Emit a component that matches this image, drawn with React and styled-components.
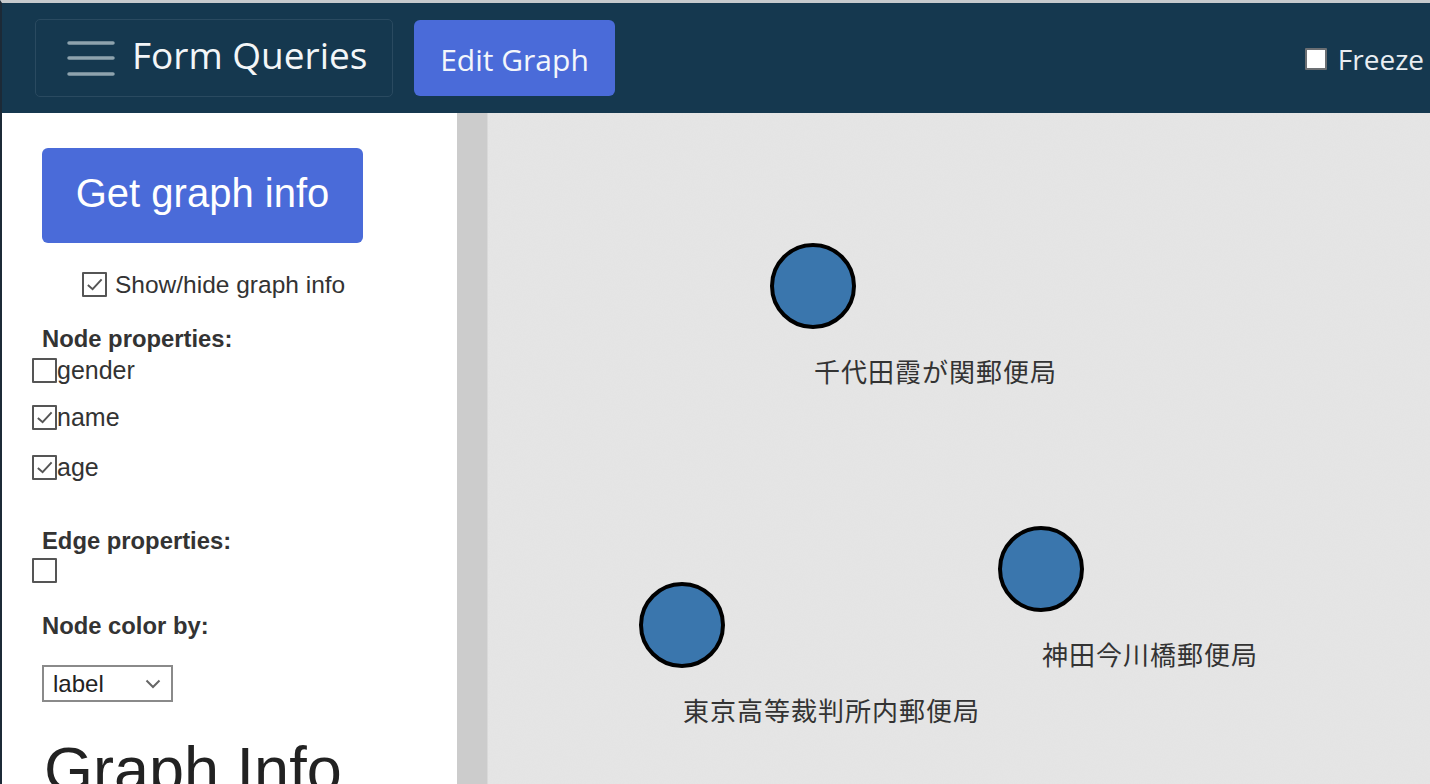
import React from "react";
import styled, { createGlobalStyle } from "styled-components";

const GlobalStyle = createGlobalStyle`
  html, body {
    margin: 0;
    padding: 0;
    height: 100%;
    overflow: hidden;
  }
  body {
    font-family: "Liberation Sans", Arial, sans-serif;
  }
  #root {
    height: 100%;
  }
`;

const nodes = [
  { id: 1, x: 325, y: 173, label: "千代田霞が関郵便局" },
  { id: 2, x: 553, y: 456, label: "神田今川橋郵便局" },
  { id: 3, x: 194, y: 512, label: "東京高等裁判所内郵便局" },
];

const nodeProps = [
  { name: "gender", checked: false, gap: 2 },
  { name: "name", checked: true, gap: 22 },
  { name: "age", checked: true, gap: 25 },
];

function CheckBox({ checked, size = 25, light }) {
  return (
    <Box $size={size} $light={light}>
      {checked && (
        <svg viewBox="0 0 20 20" width={size - 6} height={size - 6}>
          <path d="M3 10.5 L8 15 L17.5 4.5" fill="none" stroke="#555" strokeWidth="2" />
        </svg>
      )}
    </Box>
  );
}

export default function App() {
  return (
    <Root>
      <GlobalStyle />
      <Header>
        <MenuBox>
          <svg width="48" height="36" viewBox="0 0 48 36">
            <g stroke="#8ea3ae" strokeWidth="3.5" strokeLinecap="round">
              <line x1="2" y1="4" x2="46" y2="4" />
              <line x1="2" y1="19" x2="46" y2="19" />
              <line x1="2" y1="35" x2="46" y2="35" />
            </g>
          </svg>
          <span>Form Queries</span>
        </MenuBox>
        <EditButton>Edit Graph</EditButton>
        <Spacer />
        <Freeze>
          <CheckBox size={22} light />
          <span>Freeze</span>
        </Freeze>
      </Header>
      <Main>
        <Sidebar>
          <InfoButton>Get graph info</InfoButton>
          <ShowRow>
            <CheckBox checked />
            <span>Show/hide graph info</span>
          </ShowRow>
          <SectionTitle $gap={33}>Node properties:</SectionTitle>
          {nodeProps.map((p) => (
            <PropRow key={p.name} $gap={p.gap}>
              <CheckBox checked={p.checked} />
              <span>{p.name}</span>
            </PropRow>
          ))}
          <SectionTitle $gap={52}>Edge properties:</SectionTitle>
          <PropRow $gap={0}>
            <CheckBox />
          </PropRow>
          <SectionTitle $gap={34}>Node color by:</SectionTitle>
          <Select>
            <span>label</span>
            <svg width="16" height="10" viewBox="0 0 16 10">
              <path d="M1.5 1.5 L8 8 L14.5 1.5" fill="none" stroke="#666" strokeWidth="2" />
            </svg>
          </Select>
          <BigTitle>Graph Info</BigTitle>
        </Sidebar>
        <Gutter />
        <Canvas>
          <svg width="100%" height="100%">
            <defs>
              <filter id="grain">
                <feTurbulence type="fractalNoise" baseFrequency="0.9" numOctaves="2" seed="3" />
                <feColorMatrix type="matrix" values="0 0 0 0 0.5  0 0 0 0 0.5  0 0 0 0 0.5  0 0 0 0.07 0" />
              </filter>
            </defs>
            <rect width="100%" height="100%" fill="#e6e6e6" />
            <rect width="100%" height="100%" filter="url(#grain)" />
            {nodes.map((n) => (
              <g key={n.id}>
                <circle cx={n.x} cy={n.y} r="41" fill="#3a76ad" stroke="#000" strokeWidth="4" />
                <NodeLabel x={n.x + 1} y={n.y + 96}>
                  {n.label}
                </NodeLabel>
              </g>
            ))}
          </svg>
        </Canvas>
      </Main>
    </Root>
  );
}

const Root = styled.div`
  height: 100%;
  display: flex;
  flex-direction: column;
  border-top: 3px solid #c6cacd;
  border-left: 2px solid #1c2a37;
  box-sizing: border-box;
`;

const Header = styled.header`
  height: 110px;
  flex-shrink: 0;
  background: #15384f;
  display: flex;
  align-items: center;
  padding: 0 0 0 33px;
  gap: 21px;
  font-family: "Open Sans", "Noto Sans", sans-serif;
  overflow: hidden;
`;

const MenuBox = styled.div`
  height: 78px;
  width: 358px;
  box-sizing: border-box;
  border: 1.5px solid #2a4a60;
  border-radius: 5px;
  display: flex;
  align-items: center;
  padding-left: 31px;
  gap: 17px;
  color: #f3f6f8;
  font-size: 37px;
  svg {
    overflow: visible;
    margin-top: -2px;
  }
  span {
    margin-top: -8px;
  }
`;

const EditButton = styled.button`
  height: 76px;
  width: 201px;
  border: none;
  border-radius: 6px;
  background: #4a6bd9;
  color: #f3f6fb;
  font-family: "Open Sans", "Noto Sans", sans-serif;
  font-size: 30px;
  padding: 2px 0 0;
`;

const Spacer = styled.div`
  flex: 1;
`;

const Freeze = styled.label`
  display: flex;
  align-items: center;
  gap: 11px;
  color: #e9eef2;
  font-size: 28px;
  white-space: nowrap;
  margin-right: 6px;
  margin-top: 4px;
  span {
    margin-top: -2px;
  }
`;

const Box = styled.span`
  width: ${(p) => p.$size}px;
  height: ${(p) => p.$size}px;
  box-sizing: border-box;
  flex-shrink: 0;
  border: 2px solid ${(p) => (p.$light ? "#6b6f73" : "#555")};
  border-radius: 1px;
  background: #fff;
  display: inline-flex;
  align-items: center;
  justify-content: center;
`;

const Main = styled.div`
  flex: 1;
  display: flex;
  min-height: 0;
`;

const Sidebar = styled.aside`
  width: 455px;
  flex-shrink: 0;
  background: #fff;
  padding: 35px 0 0 40px;
  box-sizing: border-box;
  color: #222;
  overflow: hidden;
`;

const InfoButton = styled.button`
  width: 321px;
  height: 95px;
  border: none;
  border-radius: 6px;
  background: #4a6bd9;
  color: #fff;
  font-family: "Liberation Sans", Arial, sans-serif;
  font-size: 40px;
  padding: 0 0 4px;
  display: block;
`;

const ShowRow = styled.label`
  display: flex;
  align-items: flex-start;
  height: 25px;
  gap: 8px;
  margin: 25px 0 0 40px;
  font-size: 24.5px;
  color: #333;
  span {
    line-height: 25px;
    margin-top: 4px;
    white-space: nowrap;
  }
`;

const SectionTitle = styled.div`
  font-weight: bold;
  font-size: 23.8px;
  color: #333;
  margin-top: ${(p) => p.$gap}px;
  line-height: 26px;
  height: 26px;
`;

const PropRow = styled.label`
  display: flex;
  align-items: flex-start;
  margin-left: -10px;
  margin-top: ${(p) => p.$gap}px;
  height: 25px;
  font-size: 25px;
  color: #333;
  span {
    line-height: 25px;
    margin-top: 4px;
  }
`;

const Select = styled.div`
  margin-top: 26px;
  width: 131px;
  height: 37px;
  box-sizing: border-box;
  border: 2px solid #8a8a8a;
  display: flex;
  align-items: center;
  justify-content: space-between;
  padding: 0 10px 0 9px;
  font-size: 24px;
  color: #222;
`;

const BigTitle = styled.h1`
  margin: 36px 0 0 2px;
  font-weight: normal;
  font-size: 63px;
  color: #222;
  line-height: 1;
  white-space: nowrap;
`;

const Gutter = styled.div`
  width: 30px;
  flex-shrink: 0;
  background: #cccccc;
  border-right: 1px solid #d9d9d9;
`;

const Canvas = styled.div`
  flex: 1;
  position: relative;
  svg {
    display: block;
  }
`;

const NodeLabel = styled.text`
  font-family: "Noto Sans CJK JP", sans-serif;
  font-size: 26px;
  letter-spacing: 1px;
  fill: #333;
`;
